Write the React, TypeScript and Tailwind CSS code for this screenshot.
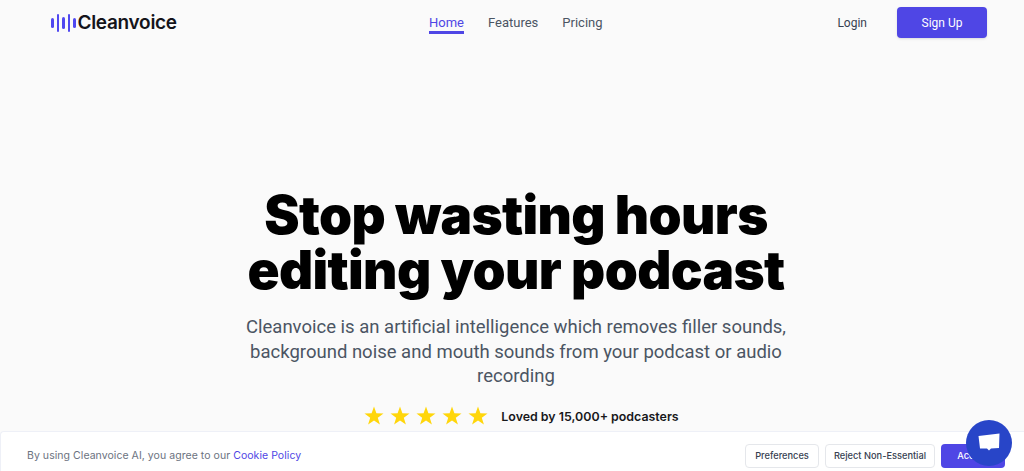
const bars = ['h-[10px]', 'h-[18px]', 'h-[12px]', 'h-[18px]', 'h-[10px]'];

function Star() {
  return (
    <svg width="20" height="20" viewBox="0 0 20 20" fill="#ffd60a">
      <path d="M10 0.5 L12.4 7.3 L19.5 7.4 L13.8 11.7 L15.9 18.6 L10 14.5 L4.1 18.6 L6.2 11.7 L0.5 7.4 L7.6 7.3 Z" />
    </svg>
  );
}

export default function App() {
  return (
    <div className="relative h-[471px] w-[1024px] overflow-hidden bg-[#fafafa] font-['Inter',sans-serif]">
      <nav className="flex h-[45px] items-center pl-[51px] pr-[37px]">
        <div className="flex w-[378px] items-center gap-[2px]">
          <div className="flex items-center gap-[3px]">
            {bars.map((h, i) => (
              <span key={i} className={`w-[2.5px] rounded-full bg-[#5048f0] ${h}`} />
            ))}
          </div>
          <span className="text-[19px] font-semibold leading-none tracking-[-0.3px] text-[#14141a]">Cleanvoice</span>
        </div>
        <div className="flex items-center gap-[24px] pt-[2px] font-['Roboto',sans-serif] text-[13px] leading-[17px] text-[#4b5563]">
          <a className="border-b-[3px] border-[#4f46e5] text-[#4f46e5]">Home</a>
          <a className="border-b-[3px] border-transparent">Features</a>
          <a className="border-b-[3px] border-transparent">Pricing</a>
        </div>
        <div className="ml-auto flex items-center gap-[30px] font-['Roboto',sans-serif] text-[12px]">
          <a className="text-[#374151]">Login</a>
          <button className="h-[31px] w-[90px] rounded-[4px] bg-[#4f46e5] text-white shadow-sm">Sign Up</button>
        </div>
      </nav>

      <main className="flex flex-col items-center pl-[8px] pt-[143px]">
        <h1 className="text-center text-[53px] font-black leading-[55px] tracking-[-0.65px] text-black">
          Stop wasting hours
          <br />
          editing your podcast
        </h1>
        <p className="mt-[17px] w-[560px] text-center font-['Roboto',sans-serif] text-[18.5px] leading-[24.5px] text-[#4b5563]">
          Cleanvoice is an artificial intelligence which removes filler sounds, background noise and mouth sounds from your podcast or audio recording
        </p>
        <div className="ml-[11px] mt-[17px] flex items-center">
          <div className="flex gap-[6px]">
            <Star />
            <Star />
            <Star />
            <Star />
            <Star />
          </div>
          <span className="ml-[13px] pt-[2px] text-[12.4px] font-semibold text-[#18181b]">Loved by 15,000+ podcasters</span>
        </div>
      </main>

      <div className="absolute bottom-0 left-0 right-0 flex h-[40px] items-center justify-between rounded-tl-[4px] border-l border-t border-[#eef0f7] bg-white pl-[26px] pr-[19px] pt-[9px]">
        <p className="text-[10.5px] tracking-[0.05px] text-[#6b7280]">
          By using Cleanvoice AI, you agree to our <a className="text-[#4f46e5]">Cookie Policy</a>
        </p>
        <div className="flex gap-[6px] text-[9.25px] font-medium">
          <button className="h-[24px] w-[74px] rounded-[4px] border border-[#e5e7eb] bg-white text-[#374151]">Preferences</button>
          <button className="h-[24px] w-[110px] rounded-[4px] border border-[#e5e7eb] bg-white text-[#374151]">Reject Non-Essential</button>
          <button className="h-[24px] w-[64px] rounded-[4px] bg-[#4f46e5] text-white">Accept</button>
        </div>
      </div>

      <div className="absolute left-[966px] top-[420px] flex h-[46px] w-[46px] items-center justify-center rounded-full bg-[#2845c8]">
        <svg width="24" height="22" viewBox="0 0 24 22" fill="white">
          <path d="M1.5 4 L22.5 1.5 L22 16 L14 16.5 L12 18.5 L10 16.5 L3 16.5 Z" />
        </svg>
      </div>
    </div>
  );
}
